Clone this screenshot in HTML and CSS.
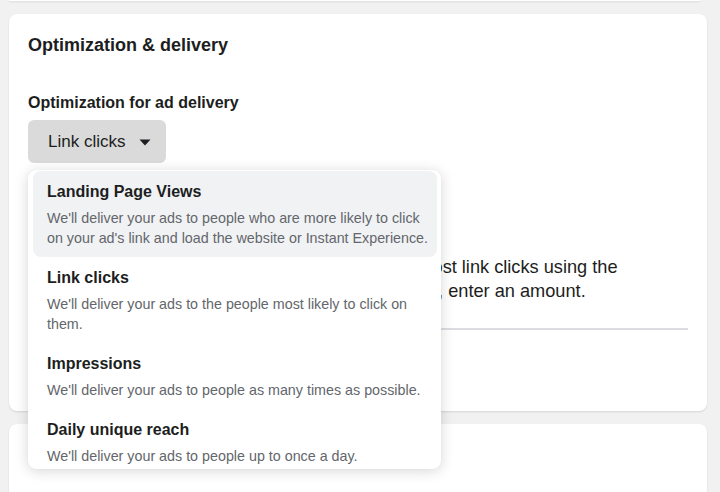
FILE: index.html
```html
<!DOCTYPE html>
<html>
<head>
<meta charset="utf-8">
<link rel="stylesheet" href="styles.css">
</head>
<body>
<div class="page">
  <div class="card card-prev"></div>
  <div class="card card-main">
    <h2 class="card-title">Optimization &amp; delivery</h2>
    <div class="field-label">Optimization for ad delivery</div>
    <div class="select-wrap">
      <button class="select-btn">
        <span>Link clicks</span>
        <svg class="caret" width="12" height="7" viewBox="0 0 12 7"><path d="M0.5 0.5 H11.5 L6 6.5 Z" fill="#1c1e21"/></svg>
      </button>
      <div class="menu">
        <div class="menu-item active">
          <div class="item-title">Landing Page Views</div>
          <div class="item-desc">We'll deliver your ads to people who are more likely to click on your ad's link and load the website or Instant Experience.</div>
        </div>
        <div class="menu-item">
          <div class="item-title">Link clicks</div>
          <div class="item-desc">We'll deliver your ads to the people most likely to click on them.</div>
        </div>
        <div class="menu-item">
          <div class="item-title">Impressions</div>
          <div class="item-desc">We'll deliver your ads to people as many times as possible.</div>
        </div>
        <div class="menu-item">
          <div class="item-title">Daily unique reach</div>
          <div class="item-desc">We'll deliver your ads to people up to once a day.</div>
        </div>
      </div>
    </div>
    <p class="info">
      <span class="line">We'll aim to spend your total budget and get the most link clicks using the</span>
      <span class="line">lowest cost bid strategy for all. To set a cost control, enter an amount.</span>
    </p>
    <div class="divider"></div>
  </div>
  <div class="card card-next"></div>
</div>
</body>
</html>
```
FILE: styles.css
```css
* { box-sizing: border-box; }
html, body { margin: 0; padding: 0; }
body {
  background: #f1f1f1;
  font-family: "Liberation Sans", Arial, sans-serif;
  color: #1c1e21;
  width: 720px;
  height: 492px;
  overflow: hidden;
}
.page {
  display: flex;
  flex-direction: column;
  gap: 13px;
  padding-left: 9px;
}
.card {
  background: #fff;
  width: 698px;
  border-radius: 8px;
  box-shadow: 0 1px 2px rgba(0,0,0,0.12);
}
.card-prev {
  height: 1px;
  border-radius: 0 0 8px 8px;
  width: 691px;
}
.card-main {
  height: 397px;
  padding: 20px 19px 0 19px;
}
.card-next {
  height: 80px;
}
.card-title {
  margin: 0;
  font-size: 18px;
  line-height: 22px;
  font-weight: 700;
}
.field-label {
  margin-top: 37px;
  font-size: 16px;
  line-height: 20px;
  font-weight: 700;
}
.select-wrap {
  position: relative;
  margin-top: 7px;
  width: fit-content;
}
.select-btn {
  display: flex;
  align-items: center;
  gap: 14px;
  height: 43px;
  padding: 0 15px 0 20px;
  border: none;
  border-radius: 6px;
  background: #dadada;
  font-family: inherit;
  font-size: 17px;
  color: #1c1e21;
  white-space: nowrap;
}
.caret { margin-top: 1px; }
.menu {
  position: absolute;
  top: 50px;
  left: 0;
  width: 413px;
  height: 299px;
  overflow: hidden;
  background: #fff;
  border-radius: 8px;
  box-shadow: 0 2px 14px rgba(0,0,0,0.16), 0 0 1px rgba(0,0,0,0.1);
  padding: 1px 4px 0 5px;
  z-index: 2;
}
.menu-item {
  padding: 10px 6px 9px 14px;
  border-radius: 8px;
}
.menu-item.active { background: #f1f2f4; }
.item-title {
  font-size: 16px;
  line-height: 22px;
  font-weight: 700;
  color: #1c1e21;
}
.item-desc {
  margin-top: 5px;
  font-size: 14.3px;
  line-height: 20px;
  color: #63666b;
}
.info {
  margin: 92px 0 0 0;
  font-size: 18.2px;
  line-height: 24px;
  color: #1c1e21;
}
.info .line { display: block; white-space: nowrap; }
.divider {
  margin-top: 25px;
  height: 2px;
  background: #dcdde2;
}
```
